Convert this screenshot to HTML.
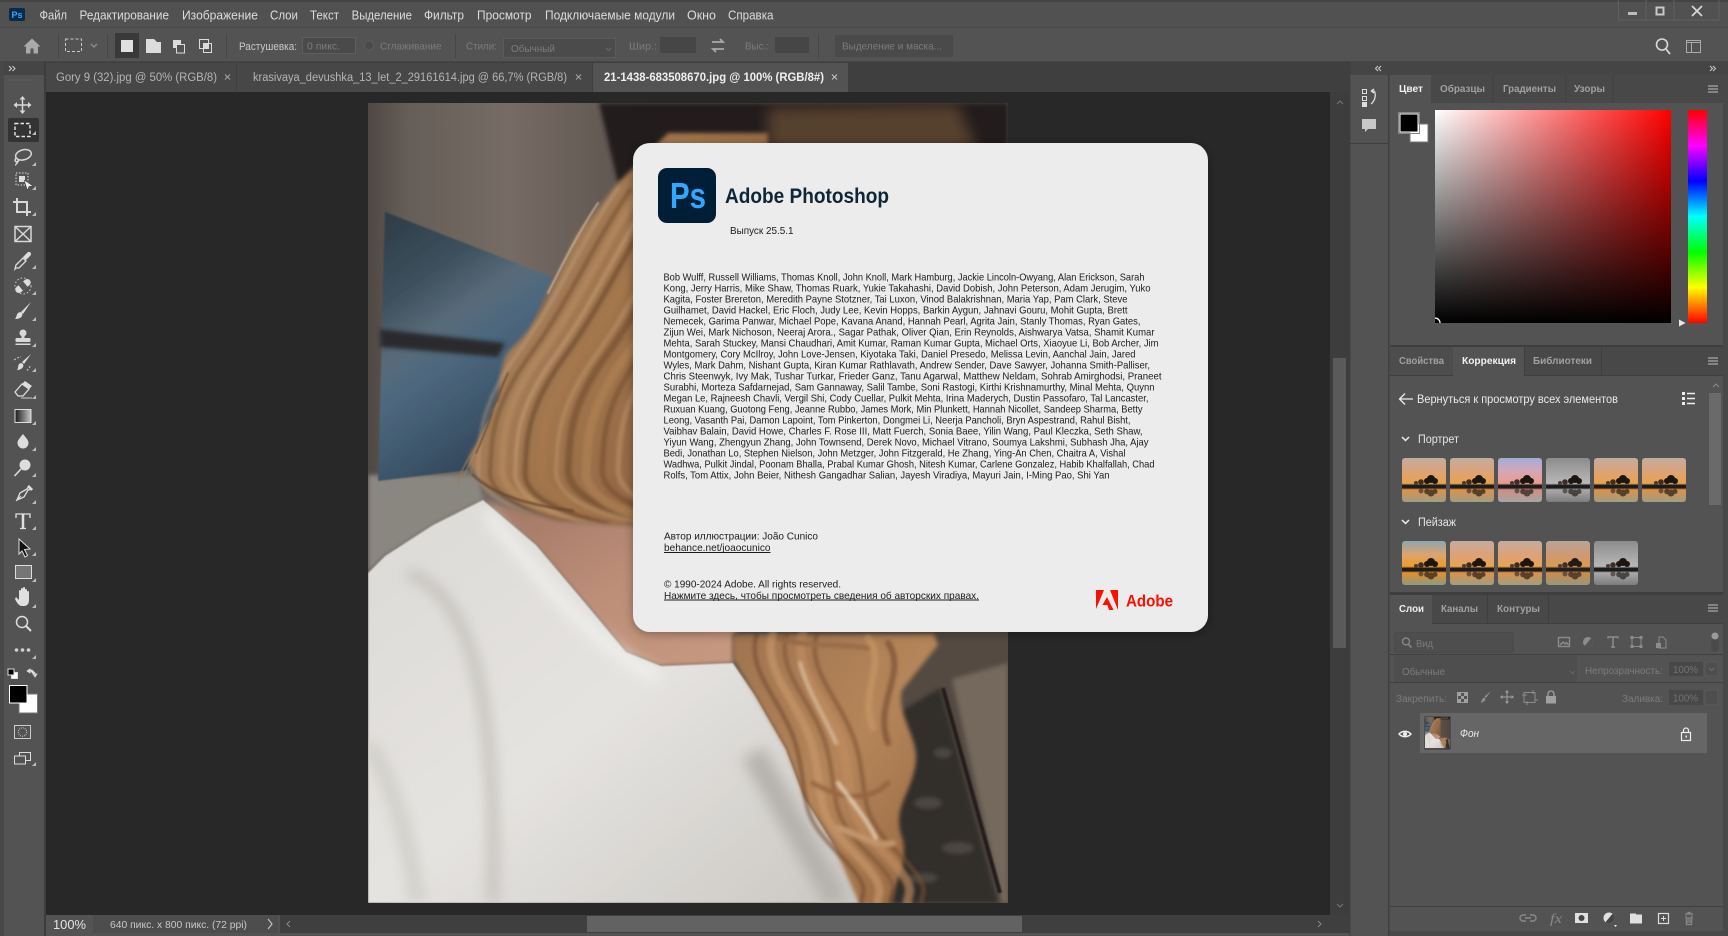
<!DOCTYPE html>
<html lang="ru">
<head>
<meta charset="utf-8">
<title>Adobe Photoshop</title>
<style>
html,body{margin:0;padding:0;background:#535353;width:1728px;height:936px;overflow:hidden}
svg{display:block}
text{font-family:"Liberation Sans","Noto Sans CJK JP",sans-serif;white-space:pre}
.m{font-size:12.5px;fill:#dcdcdc}
.o{font-size:11px;fill:#c8c8c8}
.d{font-size:10.5px;fill:#7c7c7c}
.t{font-size:11.5px;fill:#b5b5b5}
.p{font-size:10.5px;font-weight:bold;fill:#a0a0a0}
.a{font-size:10.5px;font-weight:bold;fill:#f0f0f0}
.c{font-size:10.5px;fill:#1c1c1c}
.i{fill:none;stroke:#d8d8d8;stroke-width:1.5}
.f{fill:#d8d8d8}
.g{fill:none;stroke:#8c8c8c;stroke-width:1.4}
</style>
</head>
<body>
<svg xmlns="http://www.w3.org/2000/svg" width="1728" height="936" viewBox="0 0 1728 936">
<defs>
<filter id="b1" x="-10%" y="-10%" width="120%" height="120%"><feGaussianBlur stdDeviation="2"/></filter>
<filter id="b2" x="-10%" y="-10%" width="120%" height="120%"><feGaussianBlur stdDeviation="7"/></filter>
<filter id="b3" x="-10%" y="-10%" width="120%" height="120%"><feGaussianBlur stdDeviation="0.8"/></filter>
<filter id="b4" x="-10%" y="-10%" width="120%" height="120%"><feGaussianBlur stdDeviation="1.6"/></filter>
<filter id="sh" x="-10%" y="-10%" width="120%" height="120%"><feDropShadow dx="0" dy="2" stdDeviation="5" flood-color="#000" flood-opacity=".35"/></filter>
<linearGradient id="wall" x1="0" x2="1" y1="0" y2="0"><stop offset="0" stop-color="#4e4743"/><stop offset=".06" stop-color="#655d57"/><stop offset=".22" stop-color="#766c65"/><stop offset=".4" stop-color="#605650"/><stop offset="1" stop-color="#4f4640"/></linearGradient>
<linearGradient id="paint" x1="0" x2=".45" y1="0" y2="1"><stop offset="0" stop-color="#2d3a45"/><stop offset=".3" stop-color="#3d505d"/><stop offset=".48" stop-color="#586b79"/><stop offset=".62" stop-color="#4c677e"/><stop offset="1" stop-color="#32475b"/></linearGradient>
<linearGradient id="hair" x1="0" x2="1" y1="0" y2=".7"><stop offset="0" stop-color="#ab8c6a"/><stop offset=".5" stop-color="#a0744c"/><stop offset="1" stop-color="#845a3c"/></linearGradient>
<linearGradient id="hair2" x1="0" x2="1" y1="0" y2="1"><stop offset="0" stop-color="#a0744f"/><stop offset=".5" stop-color="#b5855a"/><stop offset="1" stop-color="#946540"/></linearGradient>
<linearGradient id="sw" x1="0" x2="1" y1="0" y2="1"><stop offset="0" stop-color="#dcdad6"/><stop offset=".5" stop-color="#e5e3e0"/><stop offset="1" stop-color="#cac7c2"/></linearGradient>
<linearGradient id="skin" x1="0" x2="1" y1="0" y2="1"><stop offset="0" stop-color="#9f7663"/><stop offset=".5" stop-color="#bd8f78"/><stop offset="1" stop-color="#c99a82"/></linearGradient>
<path id="hs" d="M250 85C215 135 190 195 150 250S112 335 110 368C112 393 150 410 192 416"/>
<path id="hl" d="M395 530C382 570 425 600 436 650S436 710 476 750S496 790 500 802"/>
<g id="photo">
 <rect width="640" height="800" fill="url(#wall)"/>
 <polygon points="0,372 110,372 115,397 65,422 17,453 0,470" fill="#8a8680" filter="url(#b1)"/>
 <polygon points="231,0 640,0 640,60 300,60 250,80" fill="#241e1b" filter="url(#b1)"/>
 <polygon points="400,5 590,2 610,50 400,50" fill="#56412f" filter="url(#b2)"/>
 <polygon points="540,520 640,520 640,800 500,800" fill="#544a42"/>
 <polygon points="584,576 640,560 640,800 634,800" fill="#74675c" filter="url(#b1)"/>
 <polygon points="530,610 572,585 630,800 505,800" fill="#322d29" filter="url(#b1)"/>
 <g fill="#4c4640" filter="url(#b1)"><ellipse cx="560" cy="700" rx="14" ry="6"/><ellipse cx="590" cy="745" rx="16" ry="6"/><ellipse cx="555" cy="775" rx="15" ry="5"/><ellipse cx="575" cy="650" rx="9" ry="5"/></g>
 <path d="M575 585L632 790" stroke="#221d1a" stroke-width="4" fill="none" filter="url(#b3)"/>
 <polygon points="17,109 184,174 130,300 101,367 10,378" fill="url(#paint)" filter="url(#b3)"/>
 <polygon points="12,226 137,240 130,254 12,244" fill="#2a2a2f" filter="url(#b1)"/>
 <path d="M300 30L249 81 209 132 177 201C160 235 140 245 137 255 128 280 135 290 124 308 118 335 100 345 101 362L120 385 190 420 265 425 400 500V30z" fill="url(#hair)" filter="url(#b1)"/>
 <g fill="none" stroke-linecap="round" filter="url(#b4)" opacity=".55">
  <use href="#hs" x="0" y="0" stroke="#c4a380" stroke-width="3"/>
  <use href="#hs" x="12" y="2" stroke="#6b462b" stroke-width="4"/>
  <use href="#hs" x="24" y="0" stroke="#b98f64" stroke-width="7"/>
  <use href="#hs" x="37" y="3" stroke="#d2ae86" stroke-width="3"/>
  <use href="#hs" x="47" y="3" stroke="#5f3f27" stroke-width="5"/>
  <use href="#hs" x="63" y="0" stroke="#a9784c" stroke-width="9"/>
  <use href="#hs" x="78" y="2" stroke="#c79f74" stroke-width="3"/>
  <use href="#hs" x="90" y="0" stroke="#6b462b" stroke-width="7"/>
  <use href="#hs" x="108" y="3" stroke="#b58657" stroke-width="9"/>
  <use href="#hs" x="124" y="0" stroke="#70492c" stroke-width="5"/>
  <use href="#hs" x="140" y="0" stroke="#c2986c" stroke-width="5"/>
 </g>
 <g fill="none" stroke-linecap="round" filter="url(#b3)">
  <path d="M118 330C104 350 92 365 90 382" stroke="#9a7a58" stroke-width="1.200"/>
  <path d="M130 300C112 330 104 360 96 372" stroke="#a98a66" stroke-width="1"/>
  <path d="M140 270C126 300 118 330 108 350" stroke="#6e4d33" stroke-width="1.500"/>
  <path d="M105 372C130 395 165 402 205 408" stroke="#6a4529" stroke-width="3" opacity=".7"/>
  <path d="M230 100C210 130 195 160 180 190" stroke="#d6c0a4" stroke-width="2" opacity=".7"/>
 </g>
 <polygon points="115,397 190,418 265,423 400,500 365,531 365,560 293,563 258,549 218,501 168,442" fill="url(#skin)" filter="url(#b1)"/>
 <polygon points="0,470 17,453 65,422 115,397 168,442 218,501 258,549 293,563 365,560 387,592 418,646 436,694 463,737 503,800 0,800" fill="url(#sw)" filter="url(#b3)"/>
 <g fill="none" filter="url(#b2)">
  <path d="M40 470C95 490 130 570 125 800" stroke="#bdbab5" stroke-width="9"/>
  <path d="M118 410C170 470 220 540 290 575" stroke="#f3f2f0" stroke-width="10"/>
  <path d="M0 640C30 690 40 740 50 800" stroke="#cfcdc8" stroke-width="14"/>
  <path d="M385 650L470 800" stroke="#b5b2ac" stroke-width="24"/>
 </g>
 <path d="M365 531H566L570 542 534 587C528 610 550 635 548 657 545 690 522 705 535 737 540 770 522 785 522 802H492L463 737 436 694 418 646 387 592 365 555z" fill="url(#hair2)" filter="url(#b1)"/>
 <g fill="none" stroke-linecap="round" filter="url(#b4)" opacity=".65">
  <use href="#hl" x="-6" stroke="#6f4a30" stroke-width="4"/>
  <use href="#hl" x="10" stroke="#c9986a" stroke-width="8"/>
  <use href="#hl" x="24" stroke="#7d5235" stroke-width="4"/>
  <use href="#hl" x="40" stroke="#c08c5e" stroke-width="9"/>
  <use href="#hl" x="54" stroke="#7a4f33" stroke-width="4"/>
  <path d="M520 540C540 570 505 600 520 640" stroke="#764c32" stroke-width="6"/>
  <path d="M500 535C520 560 490 590 505 625" stroke="#c89868" stroke-width="7"/>
  <path d="M520 680C500 700 470 695 445 680" stroke="#8a5a38" stroke-width="5"/>
  <path d="M525 740C505 745 490 730 470 725" stroke="#cfa57a" stroke-width="6"/>
  <path d="M410 535C440 545 470 540 500 545" stroke="#8f6343" stroke-width="5"/>
 </g>
 <g fill="none" stroke-linecap="round" filter="url(#b4)">
  <path d="M432 560C440 590 455 610 468 640" stroke="#e0c7ac" stroke-width="4" opacity=".7"/>
  <path d="M470 680C485 700 498 715 508 735" stroke="#ead9c6" stroke-width="4" opacity=".8"/>
 </g>
</g>
<linearGradient id="t1" x1="0" x2="0" y1="0" y2="1"><stop offset="0" stop-color="#c4ad9e"/><stop offset=".3" stop-color="#dca27a"/><stop offset=".58" stop-color="#eaa24c"/><stop offset=".62" stop-color="#1c1c1c"/><stop offset=".68" stop-color="#1c1c1c"/><stop offset=".72" stop-color="#dd9148"/><stop offset="1" stop-color="#a09e84"/></linearGradient>
<linearGradient id="t2" x1="0" x2="0" y1="0" y2="1"><stop offset="0" stop-color="#a2acd8"/><stop offset=".3" stop-color="#d6a6b8"/><stop offset=".58" stop-color="#ea9c88"/><stop offset=".62" stop-color="#1c1c1c"/><stop offset=".68" stop-color="#1c1c1c"/><stop offset=".72" stop-color="#cf8e80"/><stop offset="1" stop-color="#a6a6a6"/></linearGradient>
<linearGradient id="t3" x1="0" x2="0" y1="0" y2="1"><stop offset="0" stop-color="#8c8c8c"/><stop offset=".58" stop-color="#b8b8b8"/><stop offset=".62" stop-color="#1c1c1c"/><stop offset=".68" stop-color="#1c1c1c"/><stop offset=".72" stop-color="#aaa"/><stop offset="1" stop-color="#7c7c7c"/></linearGradient>
<linearGradient id="t4" x1="0" x2="0" y1="0" y2="1"><stop offset="0" stop-color="#8ea6b0"/><stop offset=".3" stop-color="#dca472"/><stop offset=".58" stop-color="#ee9c28"/><stop offset=".62" stop-color="#1c1c1c"/><stop offset=".68" stop-color="#1c1c1c"/><stop offset=".72" stop-color="#e48f2c"/><stop offset="1" stop-color="#8c9a82"/></linearGradient>
<g id="trees" fill="#1d1510">
 <circle cx="29" cy="21" r="4"/><circle cx="25" cy="23" r="3"/><circle cx="33" cy="23" r="3"/><circle cx="19" cy="24" r="2.800" fill="#3d2c28"/><circle cx="14" cy="25" r="2" fill="#4d3834"/>
 <g opacity=".65"><circle cx="29" cy="35" r="3.500"/><circle cx="25" cy="33.500" r="2.800"/><circle cx="33" cy="33.500" r="2.500"/><circle cx="19" cy="33" r="2.500" fill="#3d2c28"/></g>
</g>
<clipPath id="tc"><rect width="44" height="44" rx="3"/></clipPath>
<g id="th1" clip-path="url(#tc)"><rect width="44" height="44" fill="url(#t1)"/><use href="#trees"/></g>
<g id="th2" clip-path="url(#tc)"><rect width="44" height="44" fill="url(#t2)"/><use href="#trees"/></g>
<g id="th3" clip-path="url(#tc)"><rect width="44" height="44" fill="url(#t3)"/><use href="#trees"/></g>
<g id="th4" clip-path="url(#tc)"><rect width="44" height="44" fill="url(#t4)"/><use href="#trees"/></g>
<linearGradient id="sv1" x1="0" x2="1" y1="0" y2="0"><stop offset="0" stop-color="#fff"/><stop offset="1" stop-color="#f00"/></linearGradient>
<linearGradient id="sv2" x1="0" x2="0" y1="0" y2="1"><stop offset="0" stop-color="#000" stop-opacity="0"/><stop offset="1" stop-color="#000"/></linearGradient>
<linearGradient id="hue" x1="0" x2="0" y1="0" y2="1"><stop offset="0" stop-color="#f00"/><stop offset=".167" stop-color="#f0f"/><stop offset=".333" stop-color="#00f"/><stop offset=".5" stop-color="#0ff"/><stop offset=".667" stop-color="#0f0"/><stop offset=".833" stop-color="#ff0"/><stop offset="1" stop-color="#f00"/></linearGradient>
<linearGradient id="gr" x1="0" x2="1" y1="0" y2="0"><stop offset="0" stop-color="#1a1a1a"/><stop offset="1" stop-color="#c8c8c8"/></linearGradient>
<clipPath id="photoClip"><rect x="368" y="103" width="640" height="800"/></clipPath>
<clipPath id="thumbClip"><rect width="640" height="800"/></clipPath>
<path id="fly" d="M0 0l-4 4h4z" fill="#bdbdbd"/>
<g id="burger"><path d="M0 0h10M0 3h10M0 6h10" stroke="#c0c0c0" stroke-width="1" fill="none"/></g>
</defs>

<!-- base -->
<rect width="1728" height="936" fill="#535353"/>

<!-- menu bar -->
<rect width="1728" height="28" fill="#515151"/>
<rect y="0" width="1728" height="2" fill="#444"/>
<rect y="27.5" width="1728" height="1" fill="#3d3d3d"/>
<rect x="9" y="8" width="16" height="13" rx="2" fill="#0b2a4a"/>
<text x="11.5" y="18" font-size="9" font-weight="bold" fill="#31a8ff" textLength="11" lengthAdjust="spacingAndGlyphs">Ps</text>
<text class="m" x="39.5" y="19.5" textLength="27.5" lengthAdjust="spacingAndGlyphs">Файл</text>
<text class="m" x="79.5" y="19.5" textLength="89.5" lengthAdjust="spacingAndGlyphs">Редактирование</text>
<text class="m" x="182" y="19.5" textLength="76" lengthAdjust="spacingAndGlyphs">Изображение</text>
<text class="m" x="270" y="19.5" textLength="28" lengthAdjust="spacingAndGlyphs">Слои</text>
<text class="m" x="310" y="19.5" textLength="29" lengthAdjust="spacingAndGlyphs">Текст</text>
<text class="m" x="351.6" y="19.5" textLength="60.4" lengthAdjust="spacingAndGlyphs">Выделение</text>
<text class="m" x="424" y="19.5" textLength="40" lengthAdjust="spacingAndGlyphs">Фильтр</text>
<text class="m" x="477" y="19.5" textLength="54.5" lengthAdjust="spacingAndGlyphs">Просмотр</text>
<text class="m" x="545" y="19.5" textLength="130" lengthAdjust="spacingAndGlyphs">Подключаемые модули</text>
<text class="m" x="687" y="19.5" textLength="29" lengthAdjust="spacingAndGlyphs">Окно</text>
<text class="m" x="728" y="19.5" textLength="45.5" lengthAdjust="spacingAndGlyphs">Справка</text>
<!-- window controls -->
<rect x="1618.5" y="-1" width="100.5" height="21" fill="none" stroke="#5f5f5f"/>
<path d="M1646 0v20M1674 0v20" stroke="#5f5f5f"/>
<rect x="1628" y="12" width="9" height="3" fill="#bdbdbd"/>
<rect x="1656.5" y="7.5" width="7" height="7" fill="none" stroke="#c8c8c8" stroke-width="2"/>
<path d="M1692 6l10 10M1702 6l-10 10" stroke="#d8d8d8" stroke-width="1.7" fill="none"/>

<!-- options bar -->
<rect y="28" width="1728" height="34" fill="#535353"/>
<rect y="61.5" width="1728" height="1" fill="#3a3a3a"/>
<path d="M32 38.5l-8.5 8h2.5v7h4.500v-5h3v5h4.500v-7h2.500z" fill="#a9a9a9"/>
<path d="M58.500 34v24M107.500 34v24M226.500 34v24M455.500 34v24M818.500 34v24" stroke="#474747"/>
<rect x="65.500" y="39" width="16" height="12.500" fill="none" stroke="#c8c8c8" stroke-dasharray="3 2"/>
<path d="M91 44l3 3 3-3" class="g"/>
<rect x="115" y="33" width="24" height="25" fill="#393939"/>
<rect x="121" y="40" width="12" height="12" fill="#e0e0e0"/>
<path d="M146 39h8l3 3h4v11h-15z" fill="#dcdcdc"/>
<rect x="173" y="40" width="8" height="8" fill="#dcdcdc"/><rect x="176.500" y="44.500" width="8" height="8.500" fill="#535353" stroke="#dcdcdc"/>
<rect x="199.500" y="39.500" width="9" height="9" fill="none" stroke="#dcdcdc"/><rect x="203.500" y="43.500" width="8" height="9" fill="none" stroke="#dcdcdc"/><rect x="203.500" y="43.500" width="5" height="5" fill="#dcdcdc"/>
<text class="o" x="239" y="50" textLength="58" lengthAdjust="spacingAndGlyphs">Растушевка:</text>
<rect x="302.500" y="37.500" width="53" height="16" fill="#4a4a4a" stroke="#5e5e5e"/>
<text class="d" x="307" y="49.500" textLength="33" lengthAdjust="spacingAndGlyphs">0 пикс.</text>
<circle cx="369" cy="45.500" r="4.500" fill="#4a4a4a" stroke="#5c5c5c"/>
<text class="d" x="380" y="49.500" textLength="61.500" lengthAdjust="spacingAndGlyphs">Сглаживание</text>
<text class="d" x="466" y="49.500" textLength="31" lengthAdjust="spacingAndGlyphs">Стили:</text>
<rect x="503.500" y="38.500" width="112" height="19" fill="#4b4b4b" stroke="#5a5a5a"/>
<text class="d" x="511" y="52" textLength="44" lengthAdjust="spacingAndGlyphs">Обычный</text>
<path d="M606 48l2.500 2.500L611 48" fill="none" stroke="#6a6a6a"/>
<text class="d" x="629" y="49.500" textLength="28" lengthAdjust="spacingAndGlyphs">Шир.:</text>
<rect x="660" y="37" width="36" height="16" fill="#464646"/>
<path d="M712 42h11l-3-3M724 49h-11l3 3" fill="none" stroke="#a9a9a9" stroke-width="1.800"/>
<text class="d" x="745" y="49.500" textLength="24" lengthAdjust="spacingAndGlyphs">Выс.:</text>
<rect x="775" y="37" width="34" height="16" fill="#464646"/>
<rect x="835" y="35" width="118" height="22" fill="#4a4a4a"/>
<text class="d" x="842" y="49.500" textLength="100" lengthAdjust="spacingAndGlyphs">Выделение и маска...</text>
<circle cx="1662" cy="44.500" r="5.500" fill="none" stroke="#d8d8d8" stroke-width="1.600"/>
<path d="M1666 49l4 5" stroke="#d8d8d8" stroke-width="1.800"/>
<rect x="1686.500" y="40.500" width="14" height="12" fill="none" stroke="#aaa"/><path d="M1686.500 42.500h14M1691.500 42.500v10" stroke="#aaa"/>

<!-- tab bar -->
<rect x="0" y="62" width="1350" height="30" fill="#3f3f3f"/>
<rect x="46" y="63" width="190" height="29" fill="#474747"/>
<rect x="237" y="63" width="355" height="29" fill="#474747"/>
<rect x="593" y="63" width="255" height="29" fill="#535353"/>
<text class="t" x="56" y="81" textLength="161" lengthAdjust="spacingAndGlyphs">Gory 9 (32).jpg @ 50% (RGB/8)</text>
<path d="M225 74.500l5 5M230 74.500l-5 5M576 74.500l5 5M581 74.500l-5 5" stroke="#a5a5a5" fill="none"/>
<text class="t" x="253" y="81" textLength="314" lengthAdjust="spacingAndGlyphs">krasivaya_devushka_13_let_2_29161614.jpg @ 66,7% (RGB/8)</text>
<text class="t" x="604" y="81" textLength="220" lengthAdjust="spacingAndGlyphs" style="fill:#efefef;font-weight:bold">21-1438-683508670.jpg @ 100% (RGB/8#)</text>
<path d="M832 74.500l5 5M837 74.500l-5 5" stroke="#c5c5c5" fill="none"/>

<!-- document area -->
<rect x="46" y="92" width="1284" height="823" fill="#282828"/>
<g clip-path="url(#photoClip)"><use href="#photo" x="368" y="103"/></g>
<!-- v scrollbar -->
<rect x="1330" y="92" width="20" height="823" fill="#3d3d3d"/>
<rect x="1333" y="358" width="13" height="290" fill="#5a5a5a"/>
<path d="M1337 104l3-3 3 3M1337 904l3 3 3-3" fill="none" stroke="#777"/>
<!-- status -->
<rect x="46" y="915" width="1304" height="18" fill="#535353"/>
<rect x="93" y="915" width="185" height="18" fill="#4d4d4d"/>
<rect x="280" y="915" width="1070" height="18" fill="#3f3f3f"/>
<rect x="587" y="916" width="435" height="16" fill="#626262"/>
<text x="53" y="929" font-size="12.500" fill="#e4e4e4" textLength="33" lengthAdjust="spacingAndGlyphs">100%</text>
<text x="110" y="928" font-size="10.500" fill="#c8c8c8" textLength="137" lengthAdjust="spacingAndGlyphs">640 пикс. x 800 пикс. (72 ppi)</text>
<path d="M268 919l4 5-4 5" fill="none" stroke="#c0c0c0" stroke-width="1.200"/>
<path d="M290 921l-3 3 3 3M1318 921l3 3-3 3" fill="none" stroke="#888"/>

<!-- dialog -->
<rect x="633" y="143" width="575" height="489" rx="17" fill="#ececec" filter="url(#sh)"/>
<rect x="658" y="168" width="58" height="55" rx="9" fill="#001e36"/>
<text x="670" y="208" font-size="36" font-weight="bold" fill="#31a8ff" textLength="36" lengthAdjust="spacingAndGlyphs">Ps</text>
<text x="725" y="203" font-size="21" font-weight="bold" fill="#0f2638" textLength="164" lengthAdjust="spacingAndGlyphs">Adobe Photoshop</text>
<text class="c" x="730" y="234" textLength="63.500" lengthAdjust="spacingAndGlyphs">Выпуск 25.5.1</text>
<text class="c" x="663.500" y="280.500" textLength="481" lengthAdjust="spacingAndGlyphs">Bob Wulff, Russell Williams, Thomas Knoll, John Knoll, Mark Hamburg, Jackie Lincoln-Owyang, Alan Erickson, Sarah</text>
<text class="c" x="663.500" y="291.500" textLength="487" lengthAdjust="spacingAndGlyphs">Kong, Jerry Harris, Mike Shaw, Thomas Ruark, Yukie Takahashi, David Dobish, John Peterson, Adam Jerugim, Yuko</text>
<text class="c" x="663.500" y="302.500" textLength="464" lengthAdjust="spacingAndGlyphs">Kagita, Foster Brereton, Meredith Payne Stotzner, Tai Luxon, Vinod Balakrishnan, Maria Yap, Pam Clark, Steve</text>
<text class="c" x="663.500" y="313.500" textLength="464" lengthAdjust="spacingAndGlyphs">Guilhamet, David Hackel, Eric Floch, Judy Lee, Kevin Hopps, Barkin Aygun, Jahnavi Gouru, Mohit Gupta, Brett</text>
<text class="c" x="663.500" y="324.500" textLength="477" lengthAdjust="spacingAndGlyphs">Nemecek, Garima Panwar, Michael Pope, Kavana Anand, Hannah Pearl, Agrita Jain, Stanly Thomas, Ryan Gates,</text>
<text class="c" x="663.500" y="335.500" textLength="491" lengthAdjust="spacingAndGlyphs">Zijun Wei, Mark Nichoson, Neeraj Arora., Sagar Pathak, Oliver Qian, Erin Reynolds, Aishwarya Vatsa, Shamit Kumar</text>
<text class="c" x="663.500" y="346.500" textLength="495" lengthAdjust="spacingAndGlyphs">Mehta, Sarah Stuckey, Mansi Chaudhari, Amit Kumar, Raman Kumar Gupta, Michael Orts, Xiaoyue Li, Bob Archer, Jim</text>
<text class="c" x="663.500" y="357.500" textLength="472" lengthAdjust="spacingAndGlyphs">Montgomery, Cory McIlroy, John Love-Jensen, Kiyotaka Taki, Daniel Presedo, Melissa Levin, Aanchal Jain, Jared</text>
<text class="c" x="663.500" y="368.500" textLength="486.500" lengthAdjust="spacingAndGlyphs">Wyles, Mark Dahm, Nishant Gupta, Kiran Kumar Rathlavath, Andrew Sender, Dave Sawyer, Johanna Smith-Palliser,</text>
<text class="c" x="663.500" y="379.500" textLength="498" lengthAdjust="spacingAndGlyphs">Chris Steenwyk, Ivy Mak, Tushar Turkar, Frieder Ganz, Tanu Agarwal, Matthew Neldam, Sohrab Amirghodsi, Praneet</text>
<text class="c" x="663.500" y="390.500" textLength="491" lengthAdjust="spacingAndGlyphs">Surabhi, Morteza Safdarnejad, Sam Gannaway, Salil Tambe, Soni Rastogi, Kirthi Krishnamurthy, Minal Mehta, Quynn</text>
<text class="c" x="663.500" y="401.500" textLength="485" lengthAdjust="spacingAndGlyphs">Megan Le, Rajneesh Chavli, Vergil Shi, Cody Cuellar, Pulkit Mehta, Irina Maderych, Dustin Passofaro, Tal Lancaster,</text>
<text class="c" x="663.500" y="412.500" textLength="479" lengthAdjust="spacingAndGlyphs">Ruxuan Kuang, Guotong Feng, Jeanne Rubbo, James Mork, Min Plunkett, Hannah Nicollet, Sandeep Sharma, Betty</text>
<text class="c" x="663.500" y="423.500" textLength="467" lengthAdjust="spacingAndGlyphs">Leong, Vasanth Pai, Damon Lapoint, Tom Pinkerton, Dongmei Li, Neerja Pancholi, Bryn Aspestrand, Rahul Bisht,</text>
<text class="c" x="663.500" y="434.500" textLength="479" lengthAdjust="spacingAndGlyphs">Vaibhav Balain, David Howe, Charles F. Rose III, Matt Fuerch, Sonia Baee, Yilin Wang, Paul Kleczka, Seth Shaw,</text>
<text class="c" x="663.500" y="445.500" textLength="485" lengthAdjust="spacingAndGlyphs">Yiyun Wang, Zhengyun Zhang, John Townsend, Derek Novo, Michael Vitrano, Soumya Lakshmi, Subhash Jha, Ajay</text>
<text class="c" x="663.500" y="456.500" textLength="462" lengthAdjust="spacingAndGlyphs">Bedi, Jonathan Lo, Stephen Nielson, John Metzger, John Fitzgerald, He Zhang, Ying-An Chen, Chaitra A, Vishal</text>
<text class="c" x="663.500" y="467.500" textLength="491" lengthAdjust="spacingAndGlyphs">Wadhwa, Pulkit Jindal, Poonam Bhalla, Prabal Kumar Ghosh, Nitesh Kumar, Carlene Gonzalez, Habib Khalfallah, Chad</text>
<text class="c" x="663.500" y="478.500" textLength="446" lengthAdjust="spacingAndGlyphs">Rolfs, Tom Attix, John Beier, Nithesh Gangadhar Salian, Jayesh Viradiya, Mayuri Jain, I-Ming Pao, Shi Yan</text>
<text class="c" x="664" y="539.500" textLength="154" lengthAdjust="spacingAndGlyphs">Автор иллюстрации: João Cunico</text>
<text class="c" x="664" y="551" textLength="106.500" lengthAdjust="spacingAndGlyphs">behance.net/joaocunico</text>
<rect x="664" y="552" width="106.500" height="1" fill="#1c1c1c"/>
<text class="c" x="664" y="587.500" textLength="177" lengthAdjust="spacingAndGlyphs">© 1990-2024 Adobe. All rights reserved.</text>
<text class="c" x="664" y="599" textLength="315" lengthAdjust="spacingAndGlyphs">Нажмите здесь, чтобы просмотреть сведения об авторских правах.</text>
<rect x="664" y="599.500" width="315" height="1" fill="#1c1c1c"/>
<path d="M1096 590h8l-8 19zM1110 590h8v20zM1107 597l6.500 13h-4.300l-1.900-5h-4.800z" fill="#fa0f00"/>
<text x="1126" y="606.500" font-size="16.500" font-weight="bold" fill="#fa0f00" textLength="47" lengthAdjust="spacingAndGlyphs">Adobe</text>

<!-- toolbar -->
<rect x="0" y="62" width="46" height="853" fill="#535353"/>
<rect x="0" y="62" width="4" height="874" fill="#484848"/>
<rect x="44" y="62" width="2" height="874" fill="#3d3d3d"/>
<rect x="4" y="62" width="40" height="13" fill="#454545"/>
<path d="M9 66l2.500 2.500L9 71M12.500 66l2.500 2.500L12.500 71" fill="none" stroke="#d0d0d0"/>
<path d="M9 80h26" stroke="#666" stroke-dasharray="1 1"/>
<rect x="8" y="118" width="31" height="24" rx="2" fill="#333"/>
<g transform="translate(22.500,105)" class="i"><path d="M0-8V8M-8 0H8"/><path class="f" stroke="none" d="M0-9l-3 3.500h6zM0 9l-3-3.500h6zM-9 0l3.500-3v6zM9 0l-3.500 3v-6z"/></g>
<rect x="15" y="123.500" width="15" height="13" fill="none" stroke="#e8e8e8" stroke-width="1.400" stroke-dasharray="3.500 2"/>
<g transform="translate(23,157)" class="i"><ellipse cx="1" cy="-2" rx="8" ry="5" transform="rotate(-15)"/><path d="M-7 1c-2 3 0 5 2 3s-2 4-3 4"/></g>
<g transform="translate(23,181)"><rect x="-7" y="-8" width="12" height="12" fill="none" stroke="#ddd" stroke-dasharray="1.500 1.500"/><rect x="-4" y="-5" width="6" height="6" fill="#ddd"/><path d="M1-1l9 6-4 .5-1.500 4z" fill="#eee" stroke="#333" stroke-width=".5"/></g>
<g transform="translate(22,207)" class="i" style="stroke-width:2"><path d="M-5-9V5H9M-9-5H5V9"/></g>
<g transform="translate(23,234)" class="i"><rect x="-8" y="-7.500" width="16" height="15"/><path d="M-8-7.500L8 7.500M8-7.500L-8 7.500"/></g>
<g transform="translate(23,260)"><path d="M-7 8l-1 1 1-4 7-7 3 3-7 7z" fill="none" stroke="#ddd" stroke-width="1.300"/><path d="M0-3l4-4c1.500-2 4-1 4 1 0 1-.5 1.500-1 2l-4 4z" fill="#ddd"/></g>
<g transform="translate(23,286) rotate(-40)"><rect x="-9" y="-3.500" width="18" height="7" rx="3.500" fill="#ddd"/><rect x="-3" y="-3.500" width="6" height="7" fill="#555"/></g>
<circle cx="23" cy="286" r="8" fill="none" stroke="#ccc" stroke-dasharray="1.500 2"/>
<g transform="translate(23,312)"><path d="M8-10L0 2l-2-2z" fill="#ddd"/><path d="M-3 0c2 .5 3 2 2 4-1 2-4 3-7 3 2-2 1-6 5-7z" fill="#ddd"/></g>
<g transform="translate(23,338)" class="f"><circle cy="-5" r="3.500"/><rect x="-1.500" y="-3" width="3" height="4"/><rect x="-7.500" y="0" width="15" height="4" rx="1"/><rect x="-7.500" y="5.500" width="15" height="1.500"/></g>
<g transform="translate(23,363)"><path d="M8-9L1 1-1-1z" fill="#ddd"/><path d="M-2 0c2 .5 3 2 2 4-1 2-4 3-6 3 2-2 0-6 4-7z" fill="#ddd"/><path d="M-9-3c3-2 5-3 7-3M7 3a8 8 0 0 1-4 5" fill="none" stroke="#ccc" stroke-dasharray="2 1.500"/></g>
<g transform="translate(23,390)"><path d="M-8 2l7-8 7 5-6 7h-5z" fill="none" stroke="#ddd" stroke-width="1.300"/><path d="M-1-6l7 5 3-3-7-5z" fill="#ddd"/><path d="M-2 8H9" stroke="#ccc"/></g>
<rect x="15" y="409.500" width="16" height="13" fill="url(#gr)" stroke="#ddd"/>
<path d="M23 434c3 4 5.500 6 5.500 9a5.500 5.500 0 0 1-11 0c0-3 2.500-5 5.500-9z" fill="#ddd"/>
<circle cx="25" cy="465" r="5.500" fill="#ddd"/><path d="M21 469l-6.500 7" stroke="#ddd" stroke-width="1.600"/>
<g transform="translate(23,495)"><path d="M6-9l3 3-4 1-4 7-7 3 3-7 7-4z" fill="none" stroke="#ddd" stroke-width="1.300"/><path d="M5-9l4 4" stroke="#ddd" stroke-width="2.500"/><path d="M-7 6l5-5" stroke="#ddd"/></g>
<g transform="translate(23,521)" fill="none" stroke="#e0e0e0"><path d="M-7-3v-4H7v4" stroke-width="1.300"/><path d="M0-7V7" stroke-width="2.500"/><path d="M-3 7.500h6" stroke-width="1.300"/></g>
<path d="M19 539l11 10-5.500 .5 3 6-2.500 1.500-3-6-3 3z" fill="#111" stroke="#ddd"/>
<rect x="15.500" y="565.500" width="16" height="13" fill="#767676" stroke="#ddd"/>
<path d="M16 597l3 3v-9a1 1 0 0 1 2 0v-2a1 1 0 0 1 2 0v-1a1 1 0 0 1 2 0v2a1 1 0 0 1 2 0v2a1 1 0 0 1 2 0v8c0 4-2 6-5 6h-2c-3 0-5-3-7-7z" fill="#e0e0e0"/>
<circle cx="22" cy="622" r="5.500" fill="none" stroke="#ddd" stroke-width="1.500"/><path d="M26 626l5 5" stroke="#ddd" stroke-width="2"/>
<circle cx="16.500" cy="650" r="1.800" fill="#d0d0d0"/><circle cx="22.500" cy="650" r="1.800" fill="#d0d0d0"/><circle cx="28.500" cy="650" r="1.800" fill="#d0d0d0"/>
<rect x="11.500" y="672.500" width="6" height="6" fill="#fff" stroke="#ddd"/><rect x="8" y="669" width="6" height="6" fill="#000" stroke="#ddd"/>
<path d="M29 670h3l3 3v3M27 671l3-2v4zM33 674l2 3 2-3z" fill="#ddd" stroke="#ddd" stroke-width=".8"/>
<rect x="19" y="694" width="18.500" height="19" fill="#fff" stroke="#777"/>
<rect x="9.500" y="685.500" width="17.500" height="17.500" fill="#000" stroke="#fff"/>
<rect x="14.500" y="725.500" width="16" height="13" fill="none" stroke="#ccc"/>
<circle cx="22.500" cy="732" r="4.200" fill="none" stroke="#ccc" stroke-dasharray="1 1"/>
<rect x="19.500" y="752.500" width="11" height="8" fill="none" stroke="#ddd"/><rect x="14.500" y="756" width="11" height="8" fill="#535353" stroke="#ddd"/>
<use href="#fly" x="36" y="131"/><use href="#fly" x="36" y="162"/><use href="#fly" x="36" y="186"/><use href="#fly" x="36" y="212"/><use href="#fly" x="36" y="265"/><use href="#fly" x="36" y="291"/><use href="#fly" x="36" y="317"/><use href="#fly" x="36" y="343"/><use href="#fly" x="36" y="368"/><use href="#fly" x="36" y="395"/><use href="#fly" x="36" y="421"/><use href="#fly" x="36" y="447"/><use href="#fly" x="36" y="473"/><use href="#fly" x="36" y="500"/><use href="#fly" x="36" y="526"/><use href="#fly" x="36" y="552"/><use href="#fly" x="36" y="578"/><use href="#fly" x="36" y="604"/><use href="#fly" x="36" y="655"/><use href="#fly" x="36" y="762"/>

<!-- right dock -->
<rect x="1350" y="62" width="378" height="874" fill="#484848"/>
<rect x="1350" y="62" width="378" height="13" fill="#454545"/>
<path d="M1378 66l-2.500 2.500 2.500 2.500M1381 66l-2.500 2.500 2.500 2.500M1710 66l2.500 2.500-2.500 2.500M1713 66l2.500 2.500-2.500 2.500" fill="none" stroke="#ccc"/>
<rect x="1350" y="75" width="38" height="861" fill="#535353"/>
<path d="M1350 143.500h38M1350 62v874M1388.500 75v861" stroke="#3f3f3f" fill="none"/>
<rect x="1362.500" y="89.500" width="4" height="4" fill="none" stroke="#ddd"/><rect x="1362.500" y="96.500" width="4" height="4" fill="none" stroke="#ddd"/><rect x="1362" y="102" width="5" height="5" fill="#ddd"/><path d="M1371 91h3c2 2 2 9-3 13M1371 91l3-2M1371 91l3 2" fill="none" stroke="#ddd" stroke-width="1.300"/>
<path d="M1362 119h14v10h-8l-3 3v-3h-3z" fill="#c8c8c8"/>

<!-- color panel -->
<rect x="1390" y="75" width="333" height="270" fill="#535353"/>
<rect x="1431" y="75" width="292" height="28" fill="#484848"/>
<path d="M1493 75v28M1566 75v28M1613 75v28" stroke="#3f3f3f"/>
<text class="a" x="1399" y="92" textLength="24" lengthAdjust="spacingAndGlyphs">Цвет</text>
<text class="p" x="1440" y="92" textLength="45" lengthAdjust="spacingAndGlyphs">Образцы</text>
<text class="p" x="1503" y="92" textLength="53" lengthAdjust="spacingAndGlyphs">Градиенты</text>
<text class="p" x="1574" y="92" textLength="31" lengthAdjust="spacingAndGlyphs">Узоры</text>
<use href="#burger" x="1708" y="86"/>
<rect x="1410" y="124" width="18" height="18" fill="#fff" stroke="#777"/>
<rect x="1400" y="114" width="18" height="18" fill="#000" stroke="#fff"/>
<rect x="1398.500" y="112.500" width="21" height="21" fill="none" stroke="#888"/>
<rect x="1435" y="110" width="236" height="213" fill="url(#sv1)"/>
<rect x="1435" y="110" width="236" height="213" fill="url(#sv2)"/>
<path d="M1435 318a5 5 0 0 1 5 5" fill="none" stroke="#fff" stroke-width="1.300"/>
<rect x="1688" y="110" width="19" height="213" fill="url(#hue)"/>
<path d="M1679 319.500l6.500 3.500-6.500 3.500z" fill="#e8e8e8"/>
<rect x="1390" y="345" width="333" height="2" fill="#3e3e3e"/>

<!-- adjustments panel -->
<rect x="1390" y="347" width="333" height="245" fill="#535353"/>
<rect x="1390" y="347" width="333" height="28" fill="#484848"/>
<rect x="1390" y="347" width="63" height="28" fill="#4d4d4d"/>
<rect x="1453" y="347" width="71" height="28" fill="#535353"/>
<path d="M1524.500 347v28M1601.500 347v28M1390 375.500h63M1524 375.500h199" stroke="#3f3f3f"/>
<text class="p" x="1399" y="364" textLength="45" lengthAdjust="spacingAndGlyphs">Свойства</text>
<text class="a" x="1462" y="364" textLength="54" lengthAdjust="spacingAndGlyphs">Коррекция</text>
<text class="p" x="1533" y="364" textLength="59" lengthAdjust="spacingAndGlyphs">Библиотеки</text>
<use href="#burger" x="1708" y="358"/>
<path d="M1413 399h-13M1405 393.500l-5.500 5.500 5.500 5.500" fill="none" stroke="#eee" stroke-width="1.300"/>
<text x="1417" y="403" font-size="11.500" fill="#eaeaea" textLength="201" lengthAdjust="spacingAndGlyphs">Вернуться к просмотру всех элементов</text>
<path d="M1682 392h3v3h-3zM1682 397h3v3h-3zM1682 402h3v3h-3z" fill="#eee"/><path d="M1687 393.500h8M1687 398.500h8M1687 403.500h8" stroke="#eee" stroke-width="1.500"/>
<rect x="1709" y="393" width="12" height="112" fill="#6a6a6a"/>
<path d="M1713 387l3-3 3 3" fill="none" stroke="#8a8a8a"/>
<path d="M1402 437l3.500 3.500 3.500-3.500" fill="none" stroke="#eee" stroke-width="1.500"/>
<text x="1418" y="443" font-size="11.500" fill="#e6e6e6" textLength="41" lengthAdjust="spacingAndGlyphs">Портрет</text>
<use href="#th1" x="1402" y="458"/><use href="#th1" x="1450" y="458"/><use href="#th2" x="1498" y="458"/><use href="#th3" x="1546" y="458"/><use href="#th1" x="1594" y="458"/><use href="#th1" x="1642" y="458"/>
<path d="M1402 520l3.500 3.500 3.500-3.500" fill="none" stroke="#eee" stroke-width="1.500"/>
<text x="1418" y="526" font-size="11.500" fill="#e6e6e6" textLength="38" lengthAdjust="spacingAndGlyphs">Пейзаж</text>
<use href="#th4" x="1402" y="541"/><use href="#th1" x="1450" y="541"/><use href="#th1" x="1498" y="541"/><use href="#th1" x="1546" y="541" opacity=".9"/><use href="#th3" x="1594" y="541"/>
<rect x="1390" y="592" width="333" height="3" fill="#3e3e3e"/>

<!-- layers panel -->
<rect x="1390" y="595" width="333" height="336" fill="#535353"/>
<rect x="1390" y="595" width="333" height="28" fill="#484848"/>
<rect x="1390" y="595" width="42" height="28" fill="#535353"/>
<path d="M1487.500 595v28M1548.500 595v28M1432 623.500h291" stroke="#3f3f3f"/>
<text class="a" x="1399" y="612" textLength="25" lengthAdjust="spacingAndGlyphs">Слои</text>
<text class="p" x="1441" y="612" textLength="37" lengthAdjust="spacingAndGlyphs">Каналы</text>
<text class="p" x="1497" y="612" textLength="43" lengthAdjust="spacingAndGlyphs">Контуры</text>
<use href="#burger" x="1708" y="605"/>
<rect x="1394.500" y="632.500" width="119" height="20" rx="2" fill="#4e4e4e" stroke="#4a4a4a"/>
<circle cx="1406" cy="641.500" r="3.500" fill="none" stroke="#8c8c8c" stroke-width="1.300"/><path d="M1408.500 644.500l3 3" stroke="#8c8c8c" stroke-width="1.500"/>
<text class="d" x="1416" y="647" textLength="17" lengthAdjust="spacingAndGlyphs">Вид</text>
<g class="g"><rect x="1558.500" y="637.500" width="11" height="9"/><path d="M1560 645l3-3 2 2 1.500-1.500 2 2.500"/></g>
<circle cx="1588" cy="642" r="5" fill="#8c8c8c"/><path d="M1588 637a5 5 0 0 1 0 10z" fill="#535353" transform="rotate(40 1588 642)"/>
<path d="M1608 638.500v-1.500h10v1.500M1613 637v10M1611 647h4" fill="none" stroke="#8c8c8c" stroke-width="1.500"/>
<rect x="1632" y="637.500" width="9" height="9" fill="none" stroke="#8c8c8c"/><rect x="1630.500" y="636" width="3" height="3" fill="#8c8c8c"/><rect x="1639.500" y="636" width="3" height="3" fill="#8c8c8c"/><rect x="1630.500" y="645" width="3" height="3" fill="#8c8c8c"/><rect x="1639.500" y="645" width="3" height="3" fill="#8c8c8c"/>
<path d="M1659 637h4l3 3v8h-7z" fill="none" stroke="#8c8c8c"/><rect x="1656" y="643" width="5" height="5" fill="#8c8c8c"/>
<rect x="1711" y="638" width="8" height="14" rx="4" fill="#4a4a4a"/><circle cx="1715" cy="636" r="3.500" fill="#9a9a9a"/>
<path d="M1390 654.500h333M1390 682.500h333" stroke="#404040"/>
<rect x="1394" y="655.500" width="183" height="26.500" fill="#4e4e4e"/>
<text class="d" x="1402" y="675" textLength="43" lengthAdjust="spacingAndGlyphs">Обычные</text>
<path d="M1570 671l2.500 2.500 2.500-2.500" fill="none" stroke="#666"/>
<text class="d" x="1585" y="674" textLength="78" lengthAdjust="spacingAndGlyphs">Непрозрачность:</text>
<rect x="1669" y="662" width="34" height="14" fill="#484848"/><rect x="1705" y="662" width="13" height="14" fill="#4e4e4e" stroke="#5a5a5a"/>
<text class="d" x="1673" y="673" textLength="25" lengthAdjust="spacingAndGlyphs" style="fill:#737373">100%</text>
<path d="M1709 668l2.500 2.500 2.500-2.500M1709 696l2.500 2.500 2.500-2.500" fill="none" stroke="#6e6e6e"/>
<text class="d" x="1396" y="702" textLength="51" lengthAdjust="spacingAndGlyphs">Закрепить:</text>
<rect x="1457.500" y="692.500" width="10" height="10" fill="none" stroke="#a0a0a0"/><rect x="1458" y="693" width="3" height="3" fill="#a0a0a0"/><rect x="1464" y="693" width="3" height="3" fill="#a0a0a0"/><rect x="1461" y="696" width="3" height="3" fill="#a0a0a0"/><rect x="1458" y="699" width="3" height="3" fill="#a0a0a0"/><rect x="1464" y="699" width="3" height="3" fill="#a0a0a0"/>
<path d="M1491 691l-5 7-1.500-1.500zM1484 697.500c1.500 .5 2 1.500 1.500 2.500-1 1.500-3 2.500-5 2.500 1.500-1.500 1-4 3.500-5z" fill="#8c8c8c"/>
<path d="M1507 691v12M1501 697h12" stroke="#a0a0a0" fill="none"/><path d="M1507 690l-2 2.500h4zM1507 704l-2-2.500h4zM1500 697l2.500-2v4zM1514 697l-2.500-2v4z" fill="#a0a0a0"/>
<path d="M1524 692.500h11v10h-11zM1522 695h5M1527 705v-4M1533 690v4M1535 700h3" fill="none" stroke="#8c8c8c"/>
<rect x="1546" y="696" width="10" height="7.500" fill="#a0a0a0"/><path d="M1548 696v-2a3 3 0 0 1 6 0v2" fill="none" stroke="#a0a0a0" stroke-width="1.300"/>
<text class="d" x="1622" y="702" textLength="41" lengthAdjust="spacingAndGlyphs">Заливка:</text>
<rect x="1669" y="690" width="34" height="15" fill="#484848"/><rect x="1705" y="690" width="13" height="15" fill="#4e4e4e" stroke="#5a5a5a"/>
<text class="d" x="1673" y="701.500" textLength="25" lengthAdjust="spacingAndGlyphs" style="fill:#737373">100%</text>
<rect x="1420" y="713" width="287" height="40" fill="#666"/>
<path d="M1399 734c3-3.500 9-3.500 12 0-3 3.500-9 3.500-12 0z" fill="none" stroke="#eee" stroke-width="1.400"/><circle cx="1405" cy="734" r="2" fill="#eee"/>
<rect x="1424.500" y="716.500" width="26" height="33" fill="#333"/>
<g transform="translate(1425,717) scale(.039)"><g clip-path="url(#thumbClip)"><use href="#photo"/></g></g>
<text x="1460" y="737" font-size="11" font-style="italic" fill="#eaeaea" textLength="19" lengthAdjust="spacingAndGlyphs">Фон</text>
<rect x="1681.500" y="732.500" width="9" height="8" fill="none" stroke="#eee" stroke-width="1.200"/><path d="M1683.500 732.500v-2a2 2 0 0 1 5 0v2" fill="none" stroke="#eee" stroke-width="1.200"/><rect x="1685.500" y="735.500" width="1.500" height="2" fill="#eee"/>
<path d="M1390 906.500h333" stroke="#3f3f3f"/>
<path d="M1526 915h-3a3 3 0 0 0 0 6h3M1530 915h3a3 3 0 0 1 0 6h-3M1525 918h6" fill="none" stroke="#8a8a8a" stroke-width="1.400"/>
<text x="1550" y="923" font-size="14" font-style="italic" fill="#8a8a8a" textLength="12" lengthAdjust="spacingAndGlyphs" style="font-family:'Liberation Serif',serif">fx</text>
<rect x="1575" y="913" width="13" height="10" fill="#e0e0e0"/><circle cx="1581.500" cy="918" r="3" fill="#444"/>
<circle cx="1609" cy="918" r="5.500" fill="#e0e0e0"/><path d="M1609 912.500a5.500 5.500 0 0 1 0 11z" fill="#444" transform="rotate(40 1609 918)"/><path d="M1614 925h3l-1.500 2z" fill="#eee"/>
<path d="M1630 913.500h6v1h6v9h-12z" fill="#e0e0e0"/>
<rect x="1658.500" y="913.500" width="10" height="10" fill="none" stroke="#ddd" stroke-width="1.200"/><path d="M1663.500 916v5M1661 918.500h5" stroke="#ddd"/>
<path d="M1685 914h8M1688 914v-1.500h2v1.500M1686 915.500l.5 9h5l.5-9M1688 917v6M1690 917v6" fill="none" stroke="#8a8a8a" stroke-width="1.200"/>
</svg>
</body>
</html>
